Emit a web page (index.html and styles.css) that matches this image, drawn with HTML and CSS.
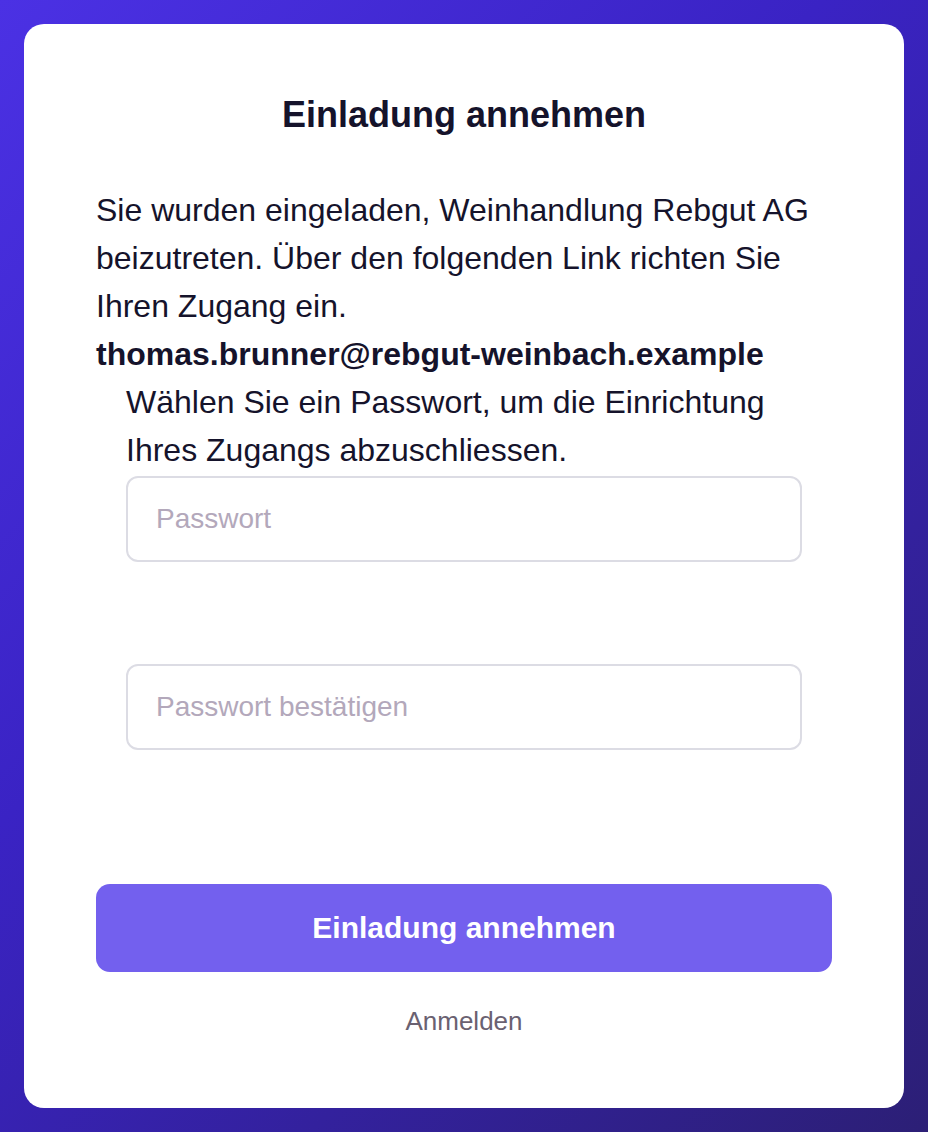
FILE: index.html
```html
<!DOCTYPE html>
<html lang="de">
<head>
    <meta charset="UTF-8">
    <meta name="viewport" content="width=device-width, initial-scale=1.0">
    <title>Einladung annehmen</title>
    <link rel="stylesheet" href="styles.css">
</head>
<body>
    <div class="card">
        <h1>Einladung annehmen</h1>
        <p class="intro">
            Sie wurden eingeladen, Weinhandlung Rebgut AG beizutreten. Über den folgenden Link richten Sie Ihren Zugang ein.<br>
            <strong>thomas.brunner@rebgut-weinbach.example</strong>
        </p>
        <form class="form">
            <p class="hint">Wählen Sie ein Passwort, um die Einrichtung Ihres Zugangs abzuschliessen.</p>
            <div class="field">
                <input type="password" placeholder="Passwort">
            </div>
            <div class="field">
                <input type="password" placeholder="Passwort bestätigen">
            </div>
        </form>
        <button type="button" class="button">Einladung annehmen</button>
        <a class="login" href="#">Anmelden</a>
    </div>
</body>
</html>
```

FILE: styles.css
```css
* {
    box-sizing: border-box;
}
html, body {
    height: 100%;
}
body {
    font-family: "Liberation Sans", Arial, sans-serif;
    background: linear-gradient(135deg, #4b31e4 0%, #3a23c4 40%, #2c1f76 100%);
    margin: 0;
    padding: 24px;
    color: #15132b;
}
.card {
    min-height: 100%;
    background-color: #fff;
    border-radius: 20px;
    padding: 64px 72px 0;
    display: flex;
    flex-direction: column;
}
h1 {
    margin: 0 0 44px;
    font-size: 36px;
    line-height: 54px;
    text-align: center;
    color: #15132b;
}
.intro {
    margin: 0;
    font-size: 32px;
    line-height: 48px;
}
.form {
    padding: 0 30px;
}
.hint {
    margin: 0 0 2px;
    font-size: 32px;
    line-height: 48px;
}
.field {
    margin-bottom: 102px;
}
.field:last-child {
    margin-bottom: 134px;
}
input {
    display: block;
    width: 100%;
    height: 86px;
    padding: 0 28px;
    border: 2px solid #dcdce4;
    border-radius: 12px;
    font-family: inherit;
    font-size: 28px;
    color: #15132b;
    outline: none;
}
input::placeholder {
    color: #b3a8bb;
}
.button {
    display: block;
    width: 100%;
    height: 88px;
    background-color: #7360ee;
    color: #fff;
    border: none;
    border-radius: 14px;
    font-family: inherit;
    font-size: 30px;
    font-weight: bold;
    cursor: pointer;
}
.login {
    display: block;
    margin-top: 31px;
    text-align: center;
    font-size: 26px;
    line-height: 36px;
    color: #6a6171;
    text-decoration: none;
}
```
